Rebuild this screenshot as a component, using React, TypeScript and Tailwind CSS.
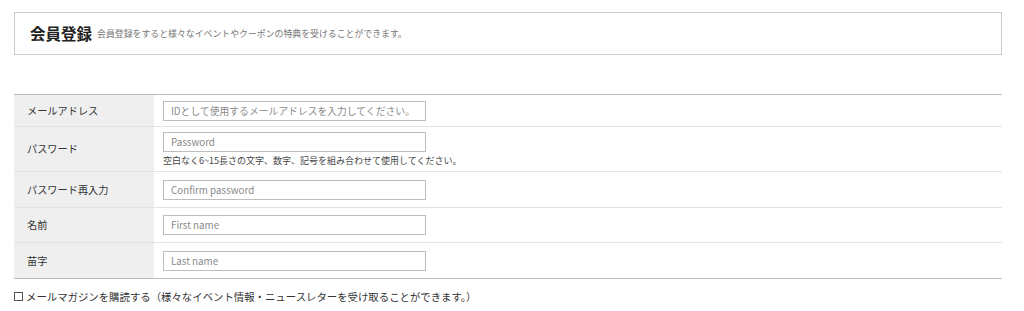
import React from "react";

const font = { fontFamily: '"Noto Sans CJK JP", "Noto Sans", sans-serif' };

function Row({ label, h, children }: { label: string; h: string; children: React.ReactNode }) {
  return (
    <div className={`flex border-b border-[#e3e3e3] last:border-b-0 ${h}`}>
      <div className="w-[140px] shrink-0 bg-[#efefef] flex items-center pl-[13px] text-[10.2px] text-[#333]">
        {label}
      </div>
      <div className="flex-1 flex flex-col justify-center pl-[9px]">{children}</div>
    </div>
  );
}

function Field({ placeholder }: { placeholder: string }) {
  return (
    <input
      type="text"
      placeholder={placeholder}
      className="w-[263px] h-[20px] border border-[#bdbdbd] bg-white px-[7px] text-[9.8px] text-[#333] placeholder:text-[#8a8a8a] outline-none"
      style={font}
    />
  );
}

export default function App() {
  return (
    <div className="w-full bg-white pl-[14px] pr-[22px] pt-[12px] pb-[10px]" style={font}>
      <div className="h-[43px] border border-[#cccccc] flex items-center pl-[15px] gap-[5px]">
        <span className="text-[15.5px] font-bold text-[#222]">会員登録</span>
        <span className="text-[8.9px] text-[#777]">
          会員登録をすると様々なイベントやクーポンの特典を受けることができます。
        </span>
      </div>

      <div className="mt-[39px] border-t border-b border-[#bbbbbb]">
        <Row label="メールアドレス" h="h-[32px]">
          <Field placeholder="IDとして使用するメールアドレスを入力してください。" />
        </Row>
        <Row label="パスワード" h="h-[45px]">
          <Field placeholder="Password" />
          <div className="mt-[3px] text-[9px] text-[#444] leading-[12px]">
            空白なく6~15長さの文字、数字、記号を組み合わせて使用してください。
          </div>
        </Row>
        <Row label="パスワード再入力" h="h-[36px]">
          <Field placeholder="Confirm password" />
        </Row>
        <Row label="名前" h="h-[35px]">
          <Field placeholder="First name" />
        </Row>
        <Row label="苗字" h="h-[35px]">
          <Field placeholder="Last name" />
        </Row>
      </div>

      <label className="mt-[10px] flex items-center gap-[3px] text-[10.4px] text-[#333]">
        <span className="inline-block w-[9px] h-[9px] border border-[#555] bg-white" />
        <span>メールマガジンを購読する（様々なイベント情報・ニュースレターを受け取ることができます。）</span>
      </label>
    </div>
  );
}
